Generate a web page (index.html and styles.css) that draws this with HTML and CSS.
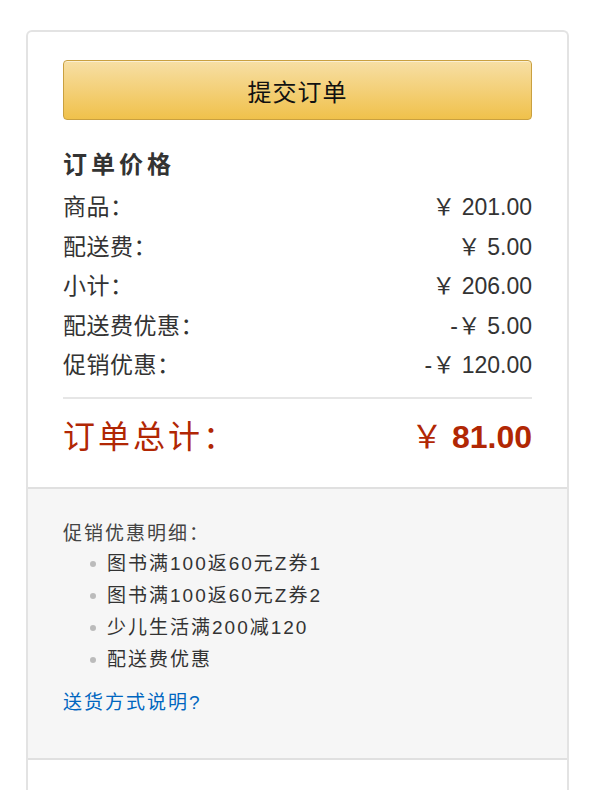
FILE: index.html
```html
<!DOCTYPE html>
<html lang="zh-CN">
<head>
<meta charset="utf-8">
<title>订单价格</title>
<link rel="stylesheet" href="styles.css">
</head>
<body>
<div class="card">
  <div class="summary">
    <button class="submit" type="button">提交订单</button>
    <h3 class="title">订单价格</h3>
    <div class="rows">
      <div class="row"><span class="label">商品：</span><span class="val">￥ 201.00</span></div>
      <div class="row"><span class="label">配送费：</span><span class="val">￥ 5.00</span></div>
      <div class="row"><span class="label">小计：</span><span class="val">￥ 206.00</span></div>
      <div class="row"><span class="label">配送费优惠：</span><span class="val">-￥ 5.00</span></div>
      <div class="row"><span class="label">促销优惠：</span><span class="val">-￥ 120.00</span></div>
    </div>
    <div class="divider"></div>
    <div class="total">
      <span class="total-label">订单总计：</span>
      <span class="total-val"><span class="yen">￥</span> <b>81.00</b></span>
    </div>
  </div>
  <div class="promo">
    <div class="promo-title">促销优惠明细：</div>
    <ul class="promo-list">
      <li>图书满100返60元Z券1</li>
      <li>图书满100返60元Z券2</li>
      <li>少儿生活满200减120</li>
      <li>配送费优惠</li>
    </ul>
    <a class="link" href="#">送货方式说明?</a>
  </div>
  <div class="footer"></div>
</div>
</body>
</html>
```
FILE: styles.css
```css
* { box-sizing: border-box; }
html, body { margin: 0; padding: 0; background: #fff; }
body {
  font-family: "Liberation Sans", "Noto Sans CJK SC", sans-serif;
  color: #333;
}
.card {
  margin: 30px 0 0 26px;
  width: 543px;
  border: 2px solid #e3e3e3;
  border-bottom: none;
  border-radius: 6px 6px 0 0;
}
.summary {
  padding: 28px 35px 25px;
}
.submit {
  display: block;
  width: 100%;
  height: 60px;
  border: 1px solid #c9a040;
  border-radius: 4px;
  background: linear-gradient(to bottom, #f7dfa5, #f0c14b);
  box-shadow: inset 0 1px 0 rgba(255,255,255,0.5);
  font-family: "Liberation Sans", "Noto Sans CJK SC", sans-serif;
  font-size: 24px;
  letter-spacing: 1px;
  color: #111;
  padding: 0;
  cursor: pointer;
}
.title {
  margin: 30px 0 0;
  font-size: 24px;
  line-height: 30px;
  font-weight: bold;
  letter-spacing: 4px;
  color: #333;
}
.rows { margin-top: 8px; }
.row {
  display: flex;
  justify-content: space-between;
  font-size: 23px;
  line-height: 39.5px;
  color: #333;
}
.label { letter-spacing: 0.5px; }
.divider {
  margin-top: 11px;
  height: 2px;
  background: #e6e6e6;
}
.total {
  display: flex;
  justify-content: space-between;
  margin-top: 13px;
  line-height: 50px;
  color: #b12704;
}
.total-label {
  font-size: 32px;
  letter-spacing: 3px;
}
.total-val { font-size: 32px; }
.total-val b { font-weight: bold; }
.promo {
  background: #f6f6f6;
  border-top: 2px solid #e0e0e0;
  border-bottom: 2px solid #e0e0e0;
  padding: 30px 35px 39px;
  font-size: 19px;
  letter-spacing: 2px;
  color: #444;
}
.promo-title { line-height: 29px; }
.promo-list {
  list-style: none;
  margin: 0;
  padding: 0;
}
.promo-list li {
  display: flex;
  align-items: center;
  line-height: 32px;
  color: #333;
}
.promo-list li::before {
  content: "";
  width: 6px;
  height: 6px;
  border-radius: 50%;
  background: #bbb;
  margin-left: 27px;
  margin-right: 11px;
  flex: none;
}
.link {
  display: block;
  margin-top: 11px;
  line-height: 32px;
  color: #0066c0;
  text-decoration: none;
}
.footer { height: 40px; }
```
